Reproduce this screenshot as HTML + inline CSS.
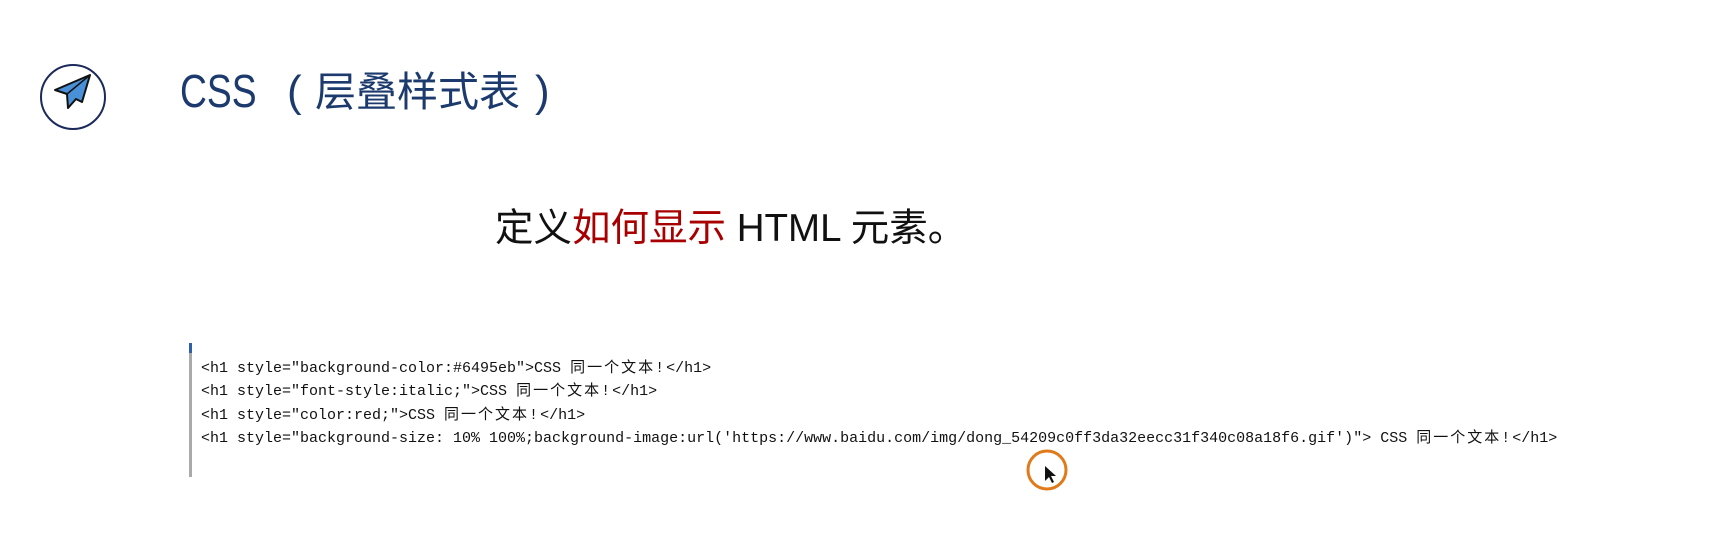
<!DOCTYPE html>
<html><head><meta charset="utf-8"><style>
html,body{margin:0;padding:0;background:#fff;width:1722px;height:559px;overflow:hidden;position:relative}
.h{position:absolute;font-family:"Liberation Sans","Noto Sans CJK SC",sans-serif;color:#1c3a6e;white-space:nowrap;line-height:1}
.s{position:absolute;left:495px;top:210px;font:38.5px "Liberation Sans","Noto Sans CJK SC",sans-serif;color:#111;white-space:nowrap;line-height:1}
.s b{font-weight:normal;color:#a80000}
.bar{position:absolute;left:189px;top:343px;width:3px;height:134px;background:#aaa}
.bar:before{content:"";position:absolute;left:0;top:0;width:3px;height:10px;background:#2f5fa8}
.c{position:absolute;left:201px;font:15px "Liberation Mono","Noto Sans CJK SC",monospace;color:#111;white-space:pre;line-height:1}
.c span{letter-spacing:2px}
</style></head><body>
<svg style="position:absolute;left:0;top:-4px" width="200" height="200">
<circle cx="73" cy="101" r="32" fill="none" stroke="#1c2a5a" stroke-width="2"/>
<polygon points="90,79 55,94 67,98 68,112 76,103 82,106" fill="#4a90d9" stroke="#111" stroke-width="2" stroke-linejoin="round"/>
<line x1="90" y1="79" x2="67" y2="98" stroke="#111" stroke-width="1.5"/>
</svg>
<div class="h" style="left:180px;top:68px;font-size:46px;transform:scaleX(.81);transform-origin:0 0">CSS</div>
<div class="h" style="left:287px;top:70px;font-size:44px">(</div>
<div class="h" style="left:315px;top:72px;font-size:41px">层叠样式表</div>
<div class="h" style="left:535px;top:70px;font-size:44px">)</div>
<div class="s">定义<b>如何显示</b> HTML 元素。</div>
<div class="bar"></div>
<div class="c" style="top:361px">&lt;h1 style="background-color:#6495eb"&gt;CSS <span>同一个文本!</span>&lt;/h1&gt;</div>
<div class="c" style="top:384px">&lt;h1 style="font-style:italic;"&gt;CSS <span>同一个文本!</span>&lt;/h1&gt;</div>
<div class="c" style="top:408px">&lt;h1 style="color:red;"&gt;CSS <span>同一个文本!</span>&lt;/h1&gt;</div>
<div class="c" style="top:431px">&lt;h1 style="background-size: 10% 100%;background-image:url('https://www.baidu.com/img/dong_54209c0ff3da32eecc31f340c08a18f6.gif')"&gt; CSS <span>同一个文本!</span>&lt;/h1&gt;</div>
<svg style="position:absolute;left:1020px;top:443px" width="56" height="56">
<circle cx="27" cy="27" r="19" fill="none" stroke="#e07a1a" stroke-width="3"/>
<polygon points="25,23 25,38 29,34 32,40 34,39 31,33 36,33" fill="#111"/>
</svg>
</body></html>
